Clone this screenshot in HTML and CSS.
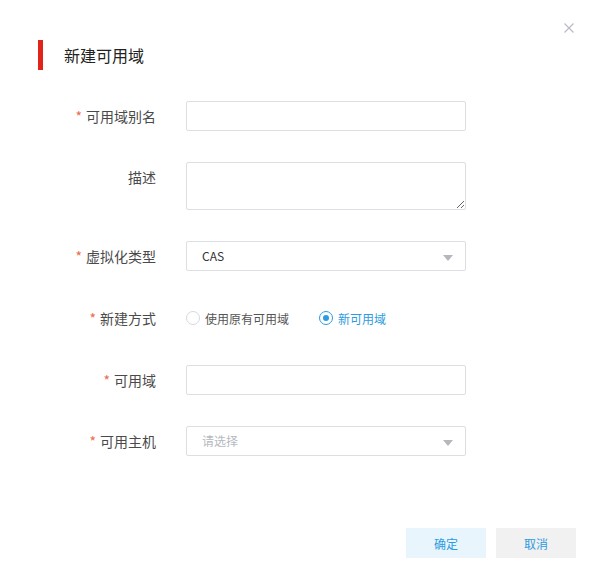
FILE: index.html
```html
<!DOCTYPE html>
<html lang="zh-CN">
<head>
  <meta charset="UTF-8">
  <title>新建可用域</title>
  <link rel="stylesheet" href="styles.css">
</head>
<body>
  <div class="dialog">
    <!-- Header -->
    <div class="dialog-header">
      <h2 class="dialog-title">新建可用域</h2>
      <span class="dialog-close">
        <svg width="10" height="10" viewBox="0 0 10 10"><path d="M0.5 0.5L9.5 9.5M9.5 0.5L0.5 9.5" stroke="#b8bcc6" stroke-width="1.2"/></svg>
      </span>
    </div>

    <!-- Form -->
    <form class="form">
      <div class="form-row">
        <label class="form-label"><span class="req">*</span>可用域别名</label>
        <input class="form-input" type="text">
      </div>
      <div class="form-row">
        <label class="form-label">描述</label>
        <textarea class="form-textarea"></textarea>
      </div>
      <div class="form-row">
        <label class="form-label"><span class="req">*</span>虚拟化类型</label>
        <div class="form-select">
          <span class="select-value">CAS</span>
          <span class="select-arrow"></span>
        </div>
      </div>
      <div class="form-row radio-row">
        <label class="form-label"><span class="req">*</span>新建方式</label>
        <div class="radio-group">
          <span class="radio"><span class="radio-dot"></span>使用原有可用域</span>
          <span class="radio checked"><span class="radio-dot"></span>新可用域</span>
        </div>
      </div>
      <div class="form-row">
        <label class="form-label"><span class="req">*</span>可用域</label>
        <input class="form-input" type="text">
      </div>
      <div class="form-row last-row">
        <label class="form-label"><span class="req">*</span>可用主机</label>
        <div class="form-select">
          <span class="select-placeholder">请选择</span>
          <span class="select-arrow"></span>
        </div>
      </div>
    </form>

    <!-- Footer -->
    <div class="dialog-footer">
      <button class="btn btn-primary" type="button">确定</button>
      <button class="btn btn-default" type="button">取消</button>
    </div>
  </div>
</body>
</html>
```

FILE: styles.css
```css
body {
  margin: 0;
  padding: 0;
  background-color: #fff;
  font-family: "Noto Sans CJK SC", "Liberation Sans", sans-serif;
  color: #333;
}
.dialog {
  position: relative;
  width: 594px;
  height: 576px;
  background-color: #fff;
}
.dialog-header {
  padding: 40px 0 0 38px;
}
.dialog-title {
  margin: 0;
  height: 30px;
  line-height: 30px;
  padding-left: 21px;
  border-left: 5px solid #e2231a;
  font-size: 16px;
  font-weight: normal;
  color: #222;
}
.dialog-close {
  position: absolute;
  top: 23px;
  right: 20px;
  width: 10px;
  height: 10px;
  display: block;
  line-height: 0;
}
.form {
  margin-top: 31px;
  padding-left: 56px;
}
.form-row {
  display: flex;
  align-items: flex-start;
  margin-bottom: 31px;
}
.form-row.last-row {
  margin-top: 2px;
  margin-bottom: 0;
}
.form-label {
  width: 100px;
  margin-right: 30px;
  text-align: right;
  font-size: 14px;
  line-height: 30px;
  color: #4a4a4a;
}
.req {
  color: #eb6b4d;
  margin-right: 4px;
  font-size: 14px;
}
.form-input,
.form-textarea,
.form-select {
  box-sizing: border-box;
  width: 280px;
  border: 1px solid #dcdee4;
  border-radius: 2px;
  background-color: #fff;
  font-family: inherit;
  font-size: 12px;
  margin: 0;
}
.form-input {
  height: 30px;
  padding: 0 15px;
}
.form-textarea {
  height: 48px;
  padding: 6px 15px;
  resize: vertical;
}
.form-select {
  position: relative;
  height: 30px;
  line-height: 28px;
  padding: 0 15px;
}
.select-value {
  color: #333;
}
.select-placeholder {
  color: #b6b9c0;
}
.select-arrow {
  position: absolute;
  right: 12px;
  top: 13px;
  width: 0;
  height: 0;
  border-left: 5px solid transparent;
  border-right: 5px solid transparent;
  border-top: 6px solid #b4b7bd;
}
.radio-row .form-label {
  line-height: 32px;
}
.radio-group {
  display: flex;
  align-items: center;
  height: 32px;
}
.radio {
  display: flex;
  align-items: center;
  font-size: 12px;
  color: #555;
  margin-right: 30px;
}
.radio-dot {
  box-sizing: border-box;
  width: 14px;
  height: 14px;
  border: 1px solid #d6d9df;
  border-radius: 50%;
  margin-right: 5px;
  position: relative;
}
.radio.checked {
  color: #2d9be0;
}
.radio.checked .radio-dot {
  border-color: #2d9be0;
}
.radio.checked .radio-dot::after {
  content: "";
  position: absolute;
  left: 3px;
  top: 3px;
  width: 6px;
  height: 6px;
  border-radius: 50%;
  background-color: #2d9be0;
}
.dialog-footer {
  position: absolute;
  right: 18px;
  bottom: 18px;
  display: flex;
  gap: 10px;
}
.btn {
  width: 80px;
  height: 30px;
  border: none;
  border-radius: 0;
  font-family: inherit;
  font-size: 12px;
  color: #2d9be0;
  cursor: pointer;
}
.btn-primary {
  background-color: #e8f5fd;
}
.btn-default {
  background-color: #f1f1f1;
}
```
